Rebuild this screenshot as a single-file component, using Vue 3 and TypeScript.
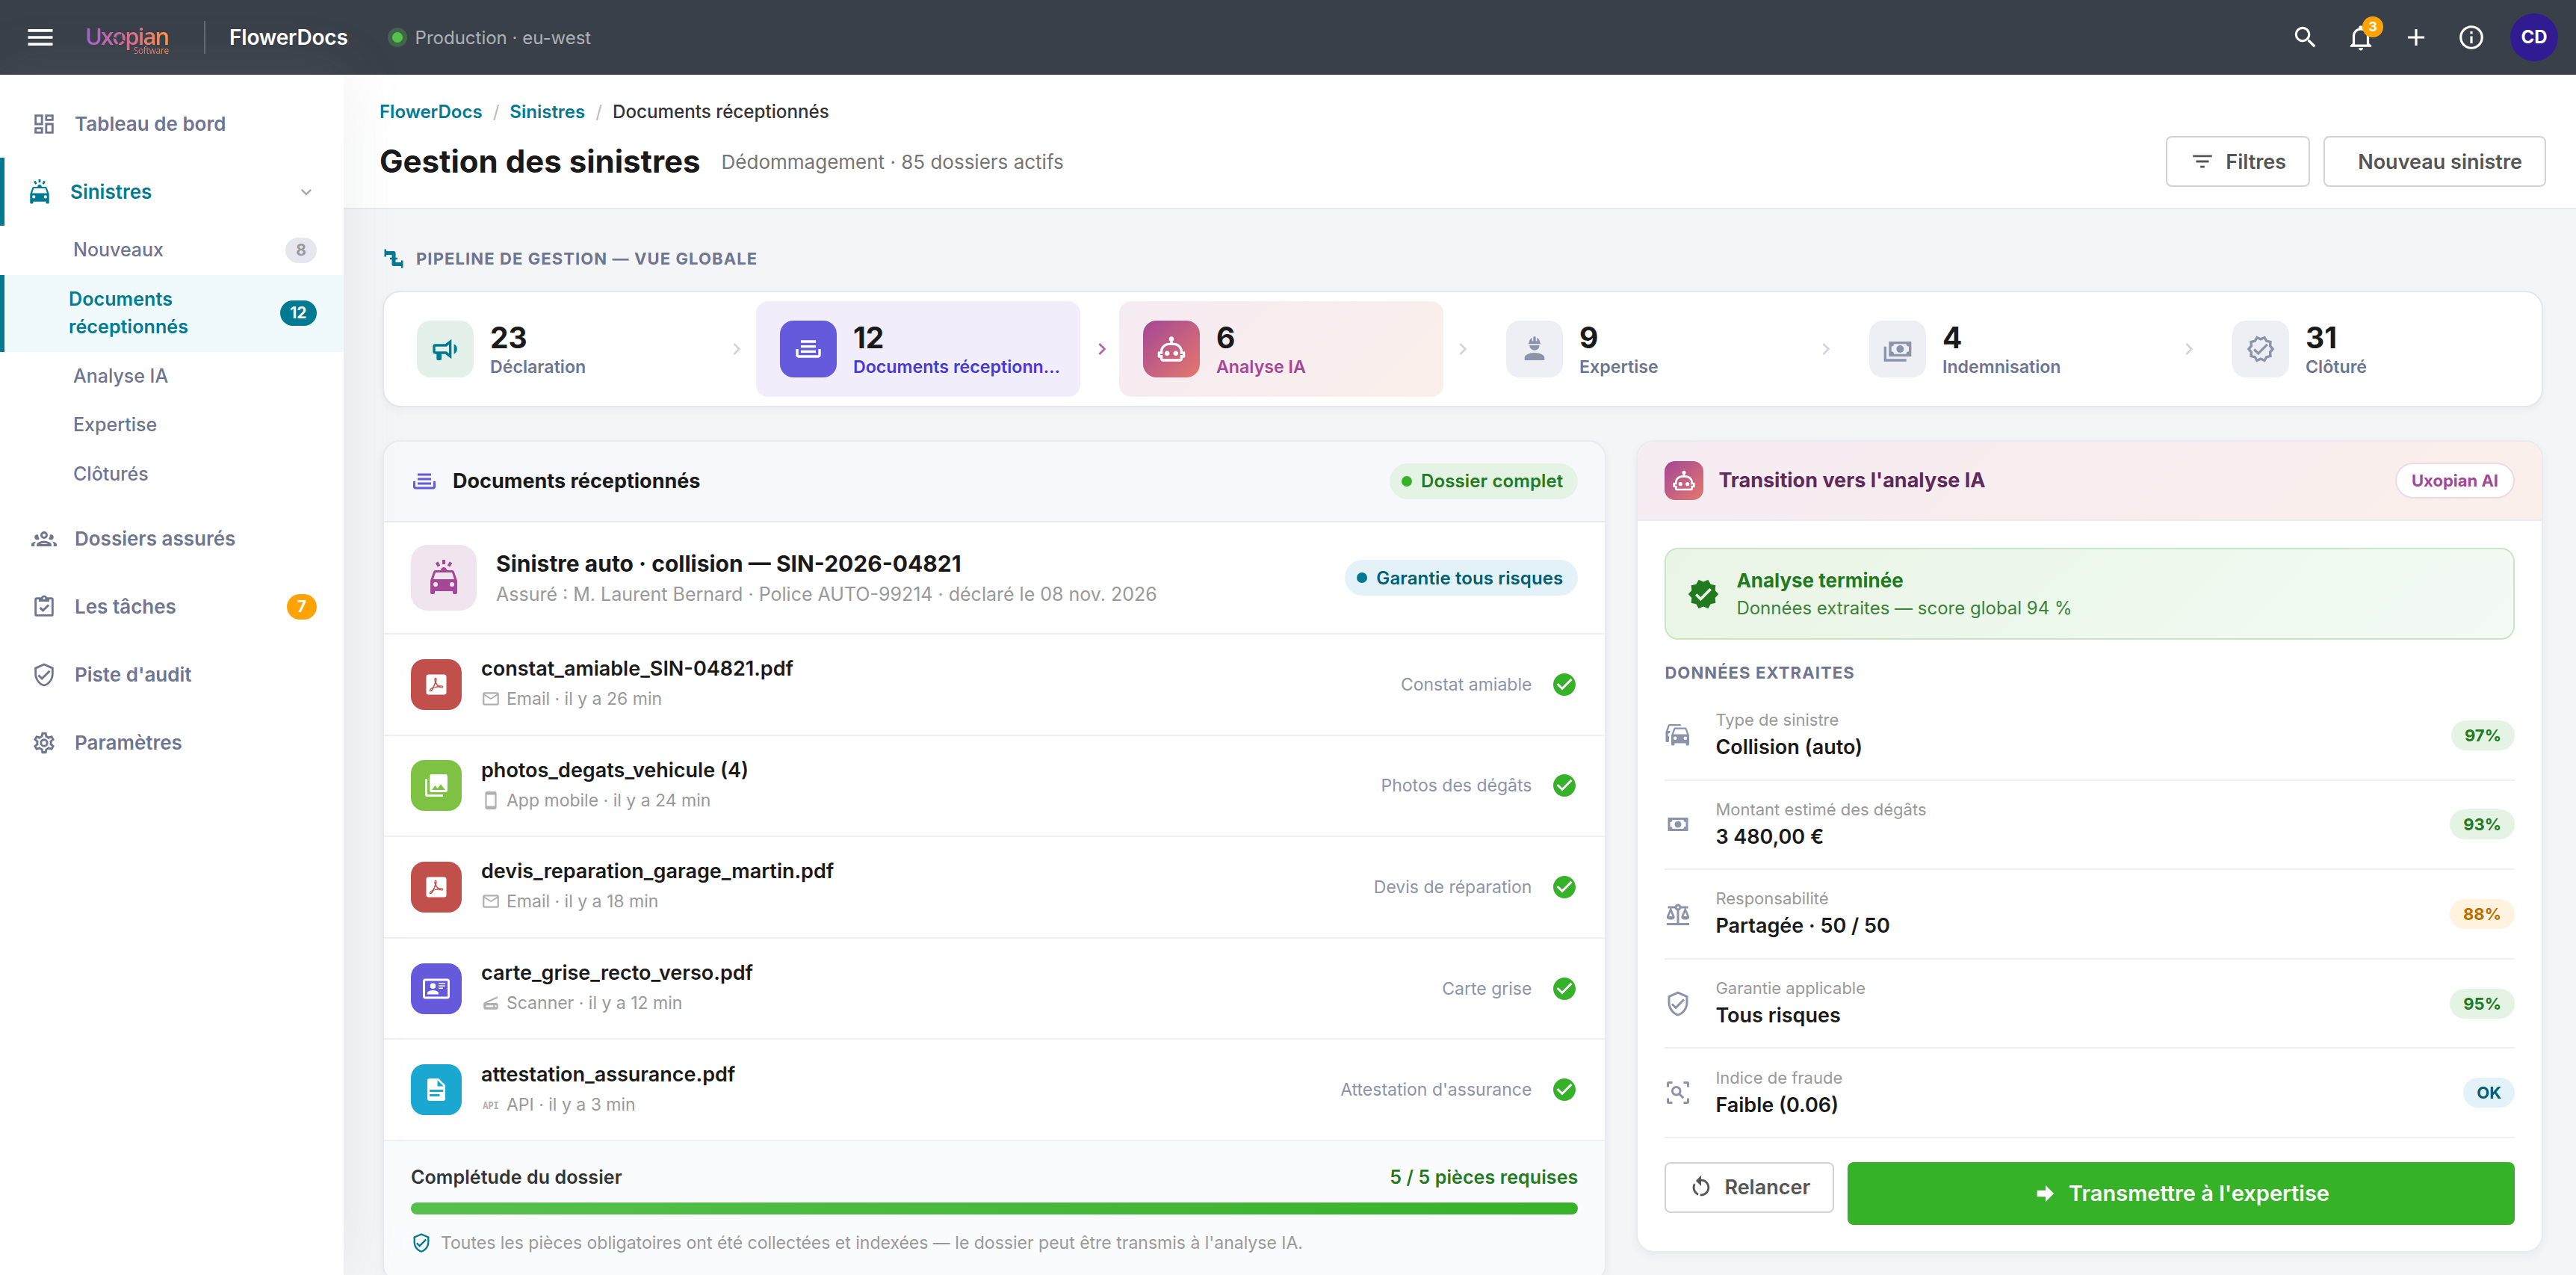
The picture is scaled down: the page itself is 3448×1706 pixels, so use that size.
<script setup lang="ts">
import { h } from 'vue'
import type { FunctionalComponent } from 'vue'

const icons: Record<string, string> = {
  menu: 'M3,6H21V8H3V6M3,11H21V13H3V11M3,16H21V18H3V16Z',
  magnify: 'M9.5,3A6.5,6.5 0 0,1 16,9.5C16,11.11 15.41,12.59 14.44,13.73L14.71,14H15.5L20.5,19L19,20.5L14,15.5V14.71L13.73,14.44C12.59,15.41 11.11,16 9.5,16A6.5,6.5 0 0,1 3,9.5A6.5,6.5 0 0,1 9.5,3M9.5,5C7,5 5,7 5,9.5C5,12 7,14 9.5,14C12,14 14,12 14,9.5C14,7 12,5 9.5,5Z',
  bell: 'M10 21H14C14 22.1 13.1 23 12 23S10 22.1 10 21M21 19V20H3V19L5 17V11C5 7.9 7 5.2 10 4.3V4C10 2.9 10.9 2 12 2S14 2.9 14 4V4.3C17 5.2 19 7.9 19 11V17L21 19M17 11C17 8.2 14.8 6 12 6S7 8.2 7 11V18H17V11Z',
  plus: 'M19,13H13V19H11V13H5V11H11V5H13V11H19V13Z',
  info: 'M11,9H13V7H11M12,20C7.59,20 4,16.41 4,12C4,7.59 7.59,4 12,4C16.41,4 20,7.59 20,12C20,16.41 16.41,20 12,20M12,2A10,10 0 0,0 2,12A10,10 0 0,0 12,22A10,10 0 0,0 22,12A10,10 0 0,0 12,2M11,17H13V11H11V17Z',
  dashboard: 'M19,5V7H15V5H19M9,5V11H5V5H9M19,13V19H15V13H19M9,17V19H5V17H9M21,3H13V9H21V3M11,3H3V13H11V3M21,11H13V21H21V11M11,15H3V21H11V15Z',
  emergency: 'M5,13L6.5,8.5H17.5L19,13M17.5,18A1.5,1.5 0 0,1 16,16.5A1.5,1.5 0 0,1 17.5,15A1.5,1.5 0 0,1 19,16.5A1.5,1.5 0 0,1 17.5,18M6.5,18A1.5,1.5 0 0,1 5,16.5A1.5,1.5 0 0,1 6.5,15A1.5,1.5 0 0,1 8,16.5A1.5,1.5 0 0,1 6.5,18M18.92,8C18.72,7.42 18.16,7 17.5,7H14C14,5.9 13.1,5 12,5S10,5.9 10,7H6.5C5.84,7 5.28,7.42 5.08,8L3,14V22A1,1 0 0,0 4,23H5A1,1 0 0,0 6,22V21H18V22A1,1 0 0,0 19,23H20A1,1 0 0,0 21,22V14L18.92,8M11,0H13V3H11V0M6.4,2.2L8.1,1.2L9.6,3.8L7.9,4.8L6.4,2.2M15.9,1.2L17.6,2.2L16.1,4.8L14.4,3.8L15.9,1.2Z',
  chevronDown: 'M7.41,8.58L12,13.17L16.59,8.58L18,10L12,16L6,10L7.41,8.58Z',
  chevronRight: 'M8.59,16.58L13.17,12L8.59,7.41L10,6L16,12L10,18L8.59,16.58Z',
  group: 'M12,5A3.5,3.5 0 0,0 8.5,8.5A3.5,3.5 0 0,0 12,12A3.5,3.5 0 0,0 15.5,8.5A3.5,3.5 0 0,0 12,5M12,7A1.5,1.5 0 0,1 13.5,8.5A1.5,1.5 0 0,1 12,10A1.5,1.5 0 0,1 10.5,8.5A1.5,1.5 0 0,1 12,7M5.5,8A2.5,2.5 0 0,0 3,10.5C3,11.44 3.53,12.25 4.29,12.68C4.65,12.88 5.06,13 5.5,13C5.94,13 6.35,12.88 6.71,12.68C7.08,12.47 7.39,12.17 7.62,11.81C6.89,10.86 6.5,9.7 6.5,8.5C6.5,8.41 6.5,8.31 6.5,8.22C6.2,8.08 5.86,8 5.5,8M18.5,8C18.14,8 17.8,8.08 17.5,8.22C17.5,8.31 17.5,8.41 17.5,8.5C17.5,9.7 17.11,10.86 16.38,11.81C16.5,12 16.63,12.15 16.78,12.3C16.94,12.45 17.1,12.58 17.29,12.68C17.65,12.88 18.06,13 18.5,13C18.94,13 19.35,12.88 19.71,12.68C20.47,12.25 21,11.44 21,10.5A2.5,2.5 0 0,0 18.5,8M12,14C9.66,14 5,15.17 5,17.5V19H19V17.5C19,15.17 14.34,14 12,14M4.71,14.55C2.78,14.78 0,15.76 0,17.5V19H3V17.07C3,16.06 3.69,15.22 4.71,14.55M19.29,14.55C20.31,15.22 21,16.06 21,17.07V19H24V17.5C24,15.76 21.22,14.78 19.29,14.55M12,16C13.53,16 15.24,16.5 16.23,17H7.77C8.76,16.5 10.47,16 12,16Z',
  clipboard: 'M19,3H14.82C14.4,1.84 13.3,1 12,1C10.7,1 9.6,1.84 9.18,3H5A2,2 0 0,0 3,5V19A2,2 0 0,0 5,21H19A2,2 0 0,0 21,19V5A2,2 0 0,0 19,3M12,3A1,1 0 0,1 13,4A1,1 0 0,1 12,5A1,1 0 0,1 11,4A1,1 0 0,1 12,3M7,7H17V5H19V19H5V5H7V7M7.5,13.5L9,12L11,14L15.5,9.5L17,11L11,17L7.5,13.5Z',
  shield: 'M21,11C21,16.55 17.16,21.74 12,23C6.84,21.74 3,16.55 3,11V5L12,1L21,5V11M12,21C15.75,20 19,15.54 19,11.22V6.3L12,3.18L5,6.3V11.22C5,15.54 8.25,20 12,21M10,17L6,13L7.41,11.59L10,14.17L16.59,7.58L18,9',
  cog: 'M12,8A4,4 0 0,1 16,12A4,4 0 0,1 12,16A4,4 0 0,1 8,12A4,4 0 0,1 12,8M12,10A2,2 0 0,0 10,12A2,2 0 0,0 12,14A2,2 0 0,0 14,12A2,2 0 0,0 12,10M10,22C9.75,22 9.54,21.82 9.5,21.58L9.13,18.93C8.5,18.68 7.96,18.34 7.44,17.94L4.95,18.95C4.73,19.03 4.46,18.95 4.34,18.73L2.34,15.27C2.21,15.05 2.27,14.78 2.46,14.63L4.57,12.97L4.5,12L4.57,11L2.46,9.37C2.27,9.22 2.21,8.95 2.34,8.73L4.34,5.27C4.46,5.05 4.73,4.96 4.95,5.05L7.44,6.05C7.96,5.66 8.5,5.32 9.13,5.07L9.5,2.42C9.54,2.18 9.75,2 10,2H14C14.25,2 14.46,2.18 14.5,2.42L14.87,5.07C15.5,5.32 16.04,5.66 16.56,6.05L19.05,5.05C19.27,4.96 19.54,5.05 19.66,5.27L21.66,8.73C21.79,8.95 21.73,9.22 21.54,9.37L19.43,11L19.5,12L19.43,13L21.54,14.63C21.73,14.78 21.79,15.05 21.66,15.27L19.66,18.73C19.54,18.95 19.27,19.04 19.05,18.95L16.56,17.95C16.04,18.34 15.5,18.68 14.87,18.93L14.5,21.58C14.46,21.82 14.25,22 14,22H10M11.25,4L10.88,6.61C9.68,6.86 8.62,7.5 7.85,8.39L5.44,7.35L4.69,8.65L6.8,10.2C6.4,11.37 6.4,12.64 6.8,13.8L4.68,15.36L5.43,16.66L7.86,15.62C8.63,16.5 9.68,17.14 10.87,17.38L11.24,20H12.76L13.13,17.39C14.32,17.14 15.37,16.5 16.14,15.62L18.57,16.66L19.32,15.36L17.2,13.81C17.6,12.64 17.6,11.37 17.2,10.2L19.31,8.65L18.56,7.35L16.15,8.39C15.38,7.5 14.32,6.86 13.12,6.62L12.75,4H11.25Z',
  filter: 'M6,13H18V11H6M3,6V8H21V6M10,18H14V16H10V18Z',
  pipe: 'M22,14H20V16H14V13H16V11H14V6A2,2 0 0,0 12,4H4V2H2V10H4V8H10V11H8V13H10V18A2,2 0 0,0 12,20H20V22H22',
  bullhorn: 'M12,8H4A2,2 0 0,0 2,10V14A2,2 0 0,0 4,16H5V20A1,1 0 0,0 6,21H8A1,1 0 0,0 9,20V16H12L17,20V4L12,8M15,15.6L13,14H4V10H13L15,8.4V15.6M21.5,12C21.5,13.71 20.54,15.26 19,16V8C20.53,8.75 21.5,10.3 21.5,12Z',
  tray: 'M18 5H6V7H18V5M6 9H18V11H6V9M2 12H4V17H20V12H22V17C22 18.11 21.11 19 20 19H4C2.9 19 2 18.11 2 17V12M18 13H6V15H18V13Z',
  robot: 'M17.5 15.5C17.5 16.61 16.61 17.5 15.5 17.5S13.5 16.61 13.5 15.5 14.4 13.5 15.5 13.5 17.5 14.4 17.5 15.5M8.5 13.5C7.4 13.5 6.5 14.4 6.5 15.5S7.4 17.5 8.5 17.5 10.5 16.61 10.5 15.5 9.61 13.5 8.5 13.5M23 15V18C23 18.55 22.55 19 22 19H21V20C21 21.11 20.11 22 19 22H5C3.9 22 3 21.11 3 20V19H2C1.45 19 1 18.55 1 18V15C1 14.45 1.45 14 2 14H3C3 10.13 6.13 7 10 7H11V5.73C10.4 5.39 10 4.74 10 4C10 2.9 10.9 2 12 2S14 2.9 14 4C14 4.74 13.6 5.39 13 5.73V7H14C17.87 7 21 10.13 21 14H22C22.55 14 23 14.45 23 15M21 16H19V14C19 11.24 16.76 9 14 9H10C7.24 9 5 11.24 5 14V16H3V17H5V20H19V17H21V16Z',
  hardHat: 'M12,15C7.58,15 4,16.79 4,19V21H20V19C20,16.79 16.42,15 12,15M8,9A4,4 0 0,0 12,13A4,4 0 0,0 16,9M11.5,2C11.2,2 11,2.21 11,2.5V5.5H10V3C10,3 7.75,3.86 7.75,6.75C7.75,6.75 7,6.89 7,8H17C16.95,6.89 16.25,6.75 16.25,6.75C16.25,3.86 14,3 14,3V5.5H13V2.5C13,2.21 12.81,2 12.5,2H11.5Z',
  cashMultiple: 'M5,6H23V18H5V6M14,9A3,3 0 0,1 17,12A3,3 0 0,1 14,15A3,3 0 0,1 11,12A3,3 0 0,1 14,9M9,8A2,2 0 0,1 7,10V14A2,2 0 0,1 9,16H19A2,2 0 0,1 21,14V10A2,2 0 0,1 19,8H9M1,10H3V20H19V22H1V10Z',
  decagramOutline: 'M23 12L20.6 9.2L20.9 5.5L17.3 4.7L15.4 1.5L12 3L8.6 1.5L6.7 4.7L3.1 5.5L3.4 9.2L1 12L3.4 14.8L3.1 18.5L6.7 19.3L8.6 22.5L12 21L15.4 22.5L17.3 19.3L20.9 18.5L20.6 14.8L23 12M18.7 16.9L16 17.5L14.6 19.9L12 18.8L9.4 19.9L8 17.5L5.3 16.9L5.5 14.1L3.7 12L5.5 9.9L5.3 7.1L8 6.5L9.4 4.1L12 5.2L14.6 4.1L16 6.5L18.7 7.1L18.5 9.9L20.3 12L18.5 14.1L18.7 16.9M16.6 7.6L18 9L10 17L6 13L7.4 11.6L10 14.2L16.6 7.6Z',
  decagram: 'M23,12L20.56,9.22L20.9,5.54L17.29,4.72L15.4,1.54L12,3L8.6,1.54L6.71,4.72L3.1,5.53L3.44,9.21L1,12L3.44,14.78L3.1,18.47L6.71,19.29L8.6,22.47L12,21L15.4,22.46L17.29,19.28L20.9,18.46L20.56,14.78L23,12M10,17L6,13L7.41,11.59L10,14.17L16.59,7.58L18,9L10,17Z',
  pdf: 'M11.43,10.94C11.2,11.68 10.87,12.47 10.42,13.34C10.22,13.72 10,14.08 9.92,14.38L10.03,14.34V14.34C11.3,13.85 12.5,13.57 13.37,13.41C13.22,13.31 13.08,13.2 12.96,13.09C12.36,12.58 11.84,11.84 11.43,10.94M17.91,14.75C17.74,14.94 17.44,15.05 17,15.05C16.24,15.05 15,14.82 14,14.31C12.28,14.5 11,14.73 9.97,15.06C9.92,15.08 9.86,15.1 9.79,15.13C8.55,17.25 7.63,18.2 6.82,18.2C6.66,18.2 6.5,18.16 6.38,18.09L5.9,17.78L5.87,17.73C5.8,17.55 5.78,17.38 5.82,17.19C5.93,16.66 6.5,15.82 7.7,15.07C7.89,14.93 8.19,14.77 8.59,14.58C8.89,14.06 9.21,13.45 9.55,12.78C10.06,11.75 10.38,10.73 10.63,9.85V9.84C10.26,8.63 10.04,7.9 10.41,6.57C10.5,6.19 10.83,5.8 11.2,5.8H11.44C11.67,5.8 11.89,5.88 12.05,6.04C12.71,6.7 12.4,8.31 12.07,9.64C12.05,9.7 12.04,9.75 12.03,9.78C12.43,10.91 13,11.82 13.63,12.34C13.89,12.54 14.18,12.74 14.5,12.92C14.95,12.87 15.38,12.85 15.79,12.85C17.03,12.85 17.78,13.07 18.07,13.54C18.17,13.7 18.22,13.89 18.19,14.09C18.18,14.34 18.09,14.57 17.91,14.75M19,3H5A2,2 0 0,0 3,5V19A2,2 0 0,0 5,21H19A2,2 0 0,0 21,19V5C21,3.89 20.1,3 19,3M17.5,14.04C17.4,13.94 17,13.69 15.6,13.69C15.53,13.69 15.46,13.69 15.37,13.79C16.1,14.11 16.81,14.3 17.27,14.3C17.34,14.3 17.4,14.29 17.46,14.28H17.5C17.55,14.26 17.58,14.25 17.57,14.15C17.56,14.12 17.55,14.08 17.5,14.04M8.33,15.5C8.12,15.62 7.95,15.73 7.85,15.81C7.14,16.46 6.69,17.12 6.64,17.5C7.09,17.35 7.68,16.69 8.33,15.5M11.35,8.59L11.4,8.55C11.47,8.23 11.5,7.95 11.56,7.73L11.59,7.57C11.69,7 11.67,6.71 11.5,6.47L11.35,6.42C11.33,6.45 11.3,6.5 11.28,6.54C11.11,6.96 11.12,7.69 11.35,8.59Z',
  images: 'M22,16V4A2,2 0 0,0 20,2H8A2,2 0 0,0 6,4V16A2,2 0 0,0 8,18H20A2,2 0 0,0 22,16M11,12L13.03,14.71L16,11L20,16H8M2,6V20A2,2 0 0,0 4,22H18V20H4V6',
  idCard: 'M22,3H2C0.91,3.04 0.04,3.91 0,5V19C0.04,20.09 0.91,20.96 2,21H22C23.09,20.96 23.96,20.09 24,19V5C23.96,3.91 23.09,3.04 22,3M22,19H2V5H22V19M14,17V15.75C14,14.09 10.66,13.25 9,13.25C7.34,13.25 4,14.09 4,15.75V17H14M9,7A2.5,2.5 0 0,0 6.5,9.5A2.5,2.5 0 0,0 9,12A2.5,2.5 0 0,0 11.5,9.5A2.5,2.5 0 0,0 9,7M14,7V8H20V7H14M14,9V10H20V9H14M14,11V12H18V11H14',
  file: 'M13,9H18.5L13,3.5V9M6,2H14L20,8V20A2,2 0 0,1 18,22H6C4.89,22 4,21.1 4,20V4C4,2.89 4.89,2 6,2M15,18V16H6V18H15M18,14V12H6V14H18Z',
  email: 'M22 6C22 4.9 21.1 4 20 4H4C2.9 4 2 4.9 2 6V18C2 19.1 2.9 20 4 20H20C21.1 20 22 19.1 22 18V6M20 6L12 11L4 6H20M20 18H4V8L12 13L20 8V18Z',
  phone: 'M17,19H7V5H17M17,1H7C5.89,1 5,1.89 5,3V21A2,2 0 0,0 7,23H17A2,2 0 0,0 19,21V3C19,1.89 18.1,1 17,1Z',
  scanner: 'M19.8,4L20.5,5.9L7,12H19C20.1,12 21,12.9 21,14V18C21,19.1 20.1,20 19,20H5C3.9,20 3,19.1 3,18V13C3,12 3.4,11.4 4.3,11L19.8,4M6,15V17H15V15H6M17,15V17H19V15H17Z',
  check: 'M12 2C6.5 2 2 6.5 2 12S6.5 22 12 22 22 17.5 22 12 17.5 2 12 2M10 17L5 12L6.41 10.59L10 14.17L17.59 6.58L19 8L10 17Z',
  cars: 'M8,11L9.5,6.5H18.5L20,11M18.5,16A1.5,1.5 0 0,1 17,14.5A1.5,1.5 0 0,1 18.5,13A1.5,1.5 0 0,1 20,14.5A1.5,1.5 0 0,1 18.5,16M9.5,16A1.5,1.5 0 0,1 8,14.5A1.5,1.5 0 0,1 9.5,13A1.5,1.5 0 0,1 11,14.5A1.5,1.5 0 0,1 9.5,16M19.92,6C19.71,5.4 19.14,5 18.5,5H9.5C8.86,5 8.29,5.4 8.08,6L6,12V20A1,1 0 0,0 7,21H8A1,1 0 0,0 9,20V19H19V20A1,1 0 0,0 20,21H21A1,1 0 0,0 22,20V12L19.92,6M14.92,3C14.71,2.4 14.14,2 13.5,2H4.5C3.86,2 3.29,2.4 3.08,3L1,9V17A1,1 0 0,0 2,18H3A1,1 0 0,0 4,17V12.91C3.22,12.63 2.82,11.77 3.1,11C3.32,10.4 3.87,10 4.5,10H4.57L5.27,8H3L4.5,3.5H15.09L14.92,3Z',
  cash: 'M3,6H21V18H3V6M12,9A3,3 0 0,1 15,12A3,3 0 0,1 12,15A3,3 0 0,1 9,12A3,3 0 0,1 12,9M7,8A2,2 0 0,1 5,10V14A2,2 0 0,1 7,16H17A2,2 0 0,1 19,14V10A2,2 0 0,1 17,8H7Z',
  scale: 'M12,3C10.73,3 9.6,3.8 9.18,5H3V7H4.95L2,14C1.53,16 3,17 5.5,17C8,17 9.56,16 9,14L6.05,7H9.17C9.5,7.85 10.15,8.5 11,8.83V20H2V22H22V20H13V8.82C13.85,8.5 14.5,7.85 14.82,7H17.95L15,14C14.53,16 16,17 18.5,17C21,17 22.56,16 22,14L19.05,7H21V5H14.83C14.4,3.8 13.27,3 12,3M12,5A1,1 0 0,1 13,6A1,1 0 0,1 12,7A1,1 0 0,1 11,6A1,1 0 0,1 12,5M5.5,10.25L7,14H4L5.5,10.25M18.5,10.25L20,14H17L18.5,10.25Z',
  scan: 'M17 22V20H20V17H22V20.5C22 20.89 21.84 21.24 21.54 21.54C21.24 21.84 20.89 22 20.5 22H17M7 22H3.5C3.11 22 2.76 21.84 2.46 21.54C2.16 21.24 2 20.89 2 20.5V17H4V20H7V22M17 2H20.5C20.89 2 21.24 2.16 21.54 2.46C21.84 2.76 22 3.11 22 3.5V7H20V4H17V2M7 2V4H4V7H2V3.5C2 3.11 2.16 2.76 2.46 2.46C2.76 2.16 3.11 2 3.5 2H7M10.5 6C13 6 15 8 15 10.5C15 11.38 14.75 12.2 14.31 12.9L17.57 16.16L16.16 17.57L12.9 14.31C12.2 14.75 11.38 15 10.5 15C8 15 6 13 6 10.5C6 8 8 6 10.5 6M10.5 8C9.12 8 8 9.12 8 10.5C8 11.88 9.12 13 10.5 13C11.88 13 13 11.88 13 10.5C13 9.12 11.88 8 10.5 8Z',
  restart: 'M12,4C14.1,4 16.1,4.8 17.6,6.3C20.7,9.4 20.7,14.5 17.6,17.6C15.8,19.5 13.3,20.2 10.9,19.9L11.4,17.9C13.1,18.1 14.9,17.5 16.2,16.2C18.5,13.9 18.5,10.1 16.2,7.7C15.1,6.6 13.5,6 12,6V10.6L7,5.6L12,0.6V4M6.3,17.6C3.7,15 3.3,11 5.1,7.9L6.6,9.4C5.5,11.6 5.9,14.4 7.8,16.2C8.3,16.7 8.9,17.1 9.6,17.4L9,19.4C8,19 7.1,18.4 6.3,17.6Z',
  arrow: 'M4,15V9H12V4.16L19.84,12L12,19.84V15H4Z',
}

const Icon: FunctionalComponent<{ name: string; size: number }> = (props) =>
  h(
    'svg',
    { viewBox: '0 0 24 24', width: props.size, height: props.size, fill: 'currentColor', 'aria-hidden': 'true', style: { flex: 'none', display: 'block' } },
    [h('path', { d: icons[props.name] })],
  )
Icon.props = ['name', 'size']

interface Stage { icon: string; count: number; label: string; tone: string }
const stages: Stage[] = [
  { icon: 'bullhorn', count: 23, label: 'Déclaration', tone: 'mint' },
  { icon: 'tray', count: 12, label: 'Documents réceptionnés', tone: 'violet' },
  { icon: 'robot', count: 6, label: 'Analyse IA', tone: 'ai' },
  { icon: 'hardHat', count: 9, label: 'Expertise', tone: 'idle' },
  { icon: 'cashMultiple', count: 4, label: 'Indemnisation', tone: 'idle' },
  { icon: 'decagramOutline', count: 31, label: 'Clôturé', tone: 'idle' },
]

interface Doc { icon: string; tone: string; name: string; via: string; source: string; kind: string }
const docs: Doc[] = [
  { icon: 'pdf', tone: 'red', name: 'constat_amiable_SIN-04821.pdf', via: 'email', source: 'Email · il y a 26 min', kind: 'Constat amiable' },
  { icon: 'images', tone: 'lime', name: 'photos_degats_vehicule (4)', via: 'phone', source: 'App mobile · il y a 24 min', kind: 'Photos des dégâts' },
  { icon: 'pdf', tone: 'red', name: 'devis_reparation_garage_martin.pdf', via: 'email', source: 'Email · il y a 18 min', kind: 'Devis de réparation' },
  { icon: 'idCard', tone: 'indigo', name: 'carte_grise_recto_verso.pdf', via: 'scanner', source: 'Scanner · il y a 12 min', kind: 'Carte grise' },
  { icon: 'file', tone: 'cyan', name: 'attestation_assurance.pdf', via: 'api', source: 'API · il y a 3 min', kind: "Attestation d'assurance" },
]

interface Field { icon: string; label: string; value: string; score: string; tone: string }
const fields: Field[] = [
  { icon: 'cars', label: 'Type de sinistre', value: 'Collision (auto)', score: '97%', tone: 'good' },
  { icon: 'cash', label: 'Montant estimé des dégâts', value: '3 480,00 €', score: '93%', tone: 'good' },
  { icon: 'scale', label: 'Responsabilité', value: 'Partagée · 50 / 50', score: '88%', tone: 'warn' },
  { icon: 'shield', label: 'Garantie applicable', value: 'Tous risques', score: '95%', tone: 'good' },
  { icon: 'scan', label: 'Indice de fraude', value: 'Faible (0.06)', score: 'OK', tone: 'info' },
]
</script>

<template>
  <div class="app">
    <header class="topbar">
      <Icon name="menu" :size="44" />
      <div class="logo">
        <span class="logo-name">Uxopian</span>
        <span class="logo-sub">Software</span>
        <svg class="aperture" viewBox="0 0 18 18" width="18" height="18"><path d="M1 6L7 9M17 12L11 9M12 1L9 6M6 17L9 12" /></svg>
      </div>
      <span class="divider"></span>
      <strong class="product">FlowerDocs</strong>
      <span class="env"><i></i>Production · eu-west</span>
      <nav class="tools">
        <button><Icon name="magnify" :size="38" /></button>
        <button><Icon name="bell" :size="38" /><b>3</b></button>
        <button><Icon name="plus" :size="38" /></button>
        <button><Icon name="info" :size="38" /></button>
        <span class="avatar">CD</span>
      </nav>
    </header>

    <div class="body">
      <aside class="sidebar">
        <a class="item"><Icon name="dashboard" :size="34" />Tableau de bord</a>
        <a class="item active"><Icon name="emergency" :size="34" />Sinistres<Icon class="caret" name="chevronDown" :size="28" /></a>
        <div class="sub">
          <a class="subitem"><span>Nouveaux</span><b class="count">8</b></a>
          <a class="subitem active"><span>Documents réceptionnés</span><b class="count teal">12</b></a>
          <a class="subitem"><span>Analyse IA</span></a>
          <a class="subitem"><span>Expertise</span></a>
          <a class="subitem"><span>Clôturés</span></a>
        </div>
        <a class="item"><Icon name="group" :size="34" />Dossiers assurés</a>
        <a class="item"><Icon name="clipboard" :size="34" />Les tâches<b class="count orange">7</b></a>
        <a class="item"><Icon name="shield" :size="34" />Piste d'audit</a>
        <a class="item"><Icon name="cog" :size="34" />Paramètres</a>
      </aside>

      <main class="main">
        <section class="pagehead">
          <div class="titles">
            <div class="crumbs"><a>FlowerDocs</a><i>/</i><a>Sinistres</a><i>/</i><span>Documents réceptionnés</span></div>
            <div class="titleline">
              <h1>Gestion des sinistres</h1>
              <span>Dédommagement · 85 dossiers actifs</span>
            </div>
          </div>
          <div class="actions">
            <button class="btn"><Icon name="filter" :size="34" />Filtres</button>
            <button class="btn"><span class="noicon"></span>Nouveau sinistre</button>
          </div>
        </section>

        <div class="content">
          <h2 class="section"><Icon name="pipe" :size="30" />PIPELINE DE GESTION — VUE GLOBALE</h2>

          <div class="pipeline">
            <template v-for="(s, i) in stages" :key="s.label">
              <div class="stage" :class="s.tone">
                <span class="stage-icon"><Icon :name="s.icon" :size="40" /></span>
                <div class="stage-text">
                  <strong>{{ s.count }}</strong>
                  <span>{{ s.label }}</span>
                </div>
              </div>
              <span v-if="i < stages.length - 1" class="arrow" :class="{ hot: i === 1 }"><Icon name="chevronRight" :size="32" /></span>
            </template>
          </div>

          <div class="columns">
            <section class="panel">
              <div class="panel-head">
                <Icon class="violet-ink" name="tray" :size="36" />
                <h3>Documents réceptionnés</h3>
                <span class="status good"><i></i>Dossier complet</span>
              </div>
              <div class="claim">
                <span class="claim-icon"><Icon name="emergency" :size="48" /></span>
                <div class="claim-text">
                  <strong>Sinistre auto · collision — SIN-2026-04821</strong>
                  <span>Assuré : M. Laurent Bernard · Police AUTO-99214 · déclaré le 08 nov. 2026</span>
                </div>
                <span class="status info"><i></i>Garantie tous risques</span>
              </div>
              <div v-for="d in docs" :key="d.name" class="doc">
                <span class="doc-icon" :class="d.tone"><Icon :name="d.icon" :size="36" /></span>
                <div class="doc-text">
                  <strong>{{ d.name }}</strong>
                  <span class="via">
                    <svg v-if="d.via === 'api'" class="api" viewBox="0 0 24 24" width="26" height="26"><text x="2" y="17.5" textLength="20" lengthAdjust="spacingAndGlyphs">API</text></svg>
                    <Icon v-else :name="d.via" :size="26" />{{ d.source }}
                  </span>
                </div>
                <span class="kind">{{ d.kind }}</span>
                <Icon class="ok" name="check" :size="36" />
              </div>
              <div class="progress">
                <div class="progress-head"><strong>Complétude du dossier</strong><b>5 / 5 pièces requises</b></div>
                <div class="bar"></div>
                <p><Icon name="shield" :size="28" />Toutes les pièces obligatoires ont été collectées et indexées — le dossier peut être transmis à l'analyse IA.</p>
              </div>
            </section>

            <section class="panel">
              <div class="panel-head ai-head">
                <span class="ai-icon"><Icon name="robot" :size="32" /></span>
                <h3>Transition vers l'analyse IA</h3>
                <span class="brand">Uxopian AI</span>
              </div>
              <div class="ai-body">
                <div class="done">
                  <Icon name="decagram" :size="44" />
                  <div>
                    <strong>Analyse terminée</strong>
                    <span>Données extraites — score global 94 %</span>
                  </div>
                </div>
                <h4>DONNÉES EXTRAITES</h4>
                <div v-for="f in fields" :key="f.label" class="field">
                  <Icon :name="f.icon" :size="36" />
                  <div class="field-text"><span>{{ f.label }}</span><strong>{{ f.value }}</strong></div>
                  <b class="score" :class="f.tone">{{ f.score }}</b>
                </div>
                <div class="ctas">
                  <button class="btn"><Icon name="restart" :size="34" />Relancer</button>
                  <button class="cta"><Icon name="arrow" :size="34" />Transmettre à l'expertise</button>
                </div>
              </div>
            </section>
          </div>
        </div>
      </main>
    </div>
  </div>
</template>

<style>
html, body { margin: 0; background: #f4f5f7; }
</style>

<style scoped>
* { box-sizing: border-box; }
h1, h2, h3, h4, p { margin: 0; }
button { font: inherit; border: 0; background: none; padding: 0; }
.app { width: 3448px; height: 1706px; overflow: hidden; display: flex; flex-direction: column; background: #f4f5f7; font-family: Inter, "Liberation Sans", sans-serif; font-size: 26px; color: #1a1a1a; }

.topbar { height: 100px; flex: none; display: flex; align-items: center; background: #3a4049; color: #fff; padding: 0 24px 0 32px; }
.logo { position: relative; width: 112px; height: 50px; padding-top: 7px; margin-left: 38px; display: flex; flex-direction: column; background: linear-gradient(90deg, #a95fd6, #d96f8c 55%, #ff9548); -webkit-background-clip: text; background-clip: text; color: transparent; }
.logo-name { font: 600 31px/32px "Open Sans", sans-serif; letter-spacing: -1.9px; }
.logo-sub { margin-top: -2px; font: 400 12px/12px "Open Sans", sans-serif; text-align: right; letter-spacing: -0.3px; }
.aperture { position: absolute; left: 37px; top: 19px; fill: none; stroke: #3a4049; stroke-width: 1.6; }
.divider { width: 2px; height: 44px; margin-left: 47px; background: #646a72; }
.product { margin-left: 32px; font-size: 28px; font-weight: 600; letter-spacing: -0.2px; }
.env { display: flex; align-items: center; margin-left: 53px; font-size: 24px; color: #aeb1b5; }
.env i { width: 14px; height: 14px; margin: 6px 17px 6px 6px; border-radius: 50%; background: #53c14a; box-shadow: 0 0 0 6px #41654b; }
.tools { margin-left: auto; display: flex; align-items: center; gap: 8px; }
.tools button { position: relative; width: 66px; height: 66px; display: flex; align-items: center; justify-content: center; color: #fff; }
.tools b { position: absolute; top: 5px; right: 3px; width: 28px; height: 28px; border-radius: 14px; background: #ffa305; font-size: 18px; font-weight: 700; line-height: 28px; text-align: center; }
.avatar { width: 64px; height: 64px; margin-left: 11px; border-radius: 50%; background: #311b92; font-size: 24px; font-weight: 700; line-height: 64px; text-align: center; }

.body { flex: 1; display: flex; min-height: 0; }
.sidebar { position: relative; z-index: 2; width: 460px; flex: none; padding-top: 20px; background: #fff; box-shadow: 0 0 80px rgba(149, 157, 165, 0.15); }
.item { height: 91px; display: flex; align-items: center; gap: 24px; padding: 0 36px 0 42px; font-size: 26px; font-weight: 600; color: #6e7590; }
.item.active { border-left: 6px solid #007a92; padding-left: 30px; color: #007a92; }
.caret { margin-left: auto; color: #a8a8a8; }
.sub { padding-bottom: 8px; }
.subitem { display: flex; align-items: center; justify-content: space-between; padding: 14px 36px 14px 98px; font-size: 25px; line-height: 37.5px; font-weight: 500; color: #6e7590; }
.subitem.active { border-left: 6px solid #007a92; padding-left: 86px; background: #f0f9fb; color: #007a92; font-weight: 600; letter-spacing: 0.1px; }
.subitem.active span { width: 180px; }
.count { flex: none; height: 34px; padding: 0 14px; border-radius: 17px; background: #e6e6ee; color: #999; font-size: 21px; font-weight: 700; line-height: 34px; letter-spacing: 0; }
.count.teal { background: #007a92; color: #fff; padding: 0 13.5px; }
.count.orange { margin-left: auto; padding: 0 14px; background: #ffa305; color: #fff; }

.main { flex: 1; min-width: 0; display: flex; flex-direction: column; }
.pagehead { height: 180px; flex: none; display: flex; justify-content: space-between; padding: 0 40px 0 48px; background: #fff; border-bottom: 2px solid #e8e9ec; }
.titles { padding-top: 29px; }
.crumbs { display: flex; height: 40px; align-items: center; font-size: 24.2px; font-weight: 500; color: #333; }
.crumbs a { font-size: 24px; color: #007a92; font-weight: 600; }
.crumbs i { margin: 0 14px; font-style: normal; font-weight: 400; color: #bbb; }
.titleline { display: flex; align-items: center; height: 52px; margin-top: 21px; gap: 28px; }
.titleline h1 { font-size: 42px; font-weight: 700; line-height: 52px; }
.titleline span { font-size: 26px; color: #757575; }
.actions { display: flex; gap: 18px; padding-top: 82px; }
.btn { height: 68px; display: flex; align-items: center; gap: 14px; padding: 0 30px; border: 2px solid #d3d3d3; border-radius: 8px; background: #fff; font-size: 27px; font-weight: 600; color: #555; }
.noicon { width: 0; }

.content { padding: 46px 44px 0 52px; }
.section { display: flex; align-items: center; gap: 15px; height: 40px; font-size: 22px; font-weight: 700; letter-spacing: 1.1px; color: #6e7590; }
.section svg { color: #007a92; }
.pipeline { display: flex; margin-top: 23px; height: 156px; padding: 12px; border: 2px solid #e6e6ee; border-radius: 24px; background: #fff; box-shadow: 0 4px 8px rgba(30, 30, 60, 0.04); }
.stage { flex: 1 1 0; min-width: 0; display: flex; align-items: center; gap: 22px; padding: 0 26px 0 32px; border-radius: 16px; color: #6e7590; }
.stage-icon { width: 76px; height: 76px; flex: none; display: flex; align-items: center; justify-content: center; border-radius: 18px; background: #eeeff4; color: #8c94ab; }
.stage-text { min-width: 0; display: flex; flex-direction: column; padding-top: 5px; }
.stage-text strong { height: 42px; font-size: 39px; font-weight: 700; line-height: 42px; color: #1a1a1a; }
.stage-text span { font-size: 23.2px; font-weight: 600; line-height: 36px; white-space: nowrap; overflow: hidden; text-overflow: ellipsis; }
.mint .stage-icon { background: #e4f1ea; color: #007a92; }
.violet { background: #f1edfb; color: #4638d2; }
.violet .stage-icon { background: #6559dc; color: #fff; }
.ai { background: linear-gradient(135deg, #f5ecf3, #fbefea); color: #a34796; }
.ai .stage-icon, .ai-icon { background: linear-gradient(135deg, #a34796, #e5786d); color: #fff; }
.arrow { width: 52px; flex: none; display: flex; align-items: center; justify-content: center; color: #d3d4de; }
.arrow.hot { padding-left: 6px; color: #b565aa; }

.columns { display: grid; grid-template-columns: 1.35fr 1fr; gap: 40px; margin-top: 44px; align-items: start; }
.panel { overflow: hidden; border: 2px solid #eaebf0; border-radius: 24px; background: #fff; box-shadow: 0 4px 12px rgba(30, 30, 60, 0.05); }
.panel-head { display: flex; align-items: center; height: 108px; padding: 0 36px 1px; border-bottom: 2px solid #eaebef; background: #f7f8fc; }
.panel-head h3 { margin-left: 20px; font-size: 27px; font-weight: 700; }
.violet-ink { color: #6559dc; }
.status { margin-left: auto; height: 48px; display: flex; align-items: center; gap: 12px; padding: 0 20px 0 16px; border-radius: 24px; font-size: 24px; font-weight: 600; letter-spacing: 0.12px; }
.status i { width: 14px; height: 14px; border-radius: 50%; background: currentColor; }
.status.good { background: #e5f3e4; color: #227a1e; }
.status.good i { background: #36b229; }
.status.info { background: #e3f2f8; color: #005f73; }
.status.info i { background: #007a92; }
.claim { display: flex; align-items: center; height: 150px; padding: 0 36px; border-bottom: 2px solid #f0f0f3; }
.claim-icon { width: 88px; height: 88px; display: flex; align-items: center; justify-content: center; border-radius: 22px; background: #f0e4ef; color: #a34796; }
.claim-text { display: flex; flex-direction: column; margin-left: 26px; }
.claim-text strong { font-size: 30px; font-weight: 700; line-height: 43px; }
.claim-text span { font-size: 25px; line-height: 38px; color: #999; }
.doc { display: flex; align-items: center; height: 135.6px; padding: 0 36px; border-bottom: 2px solid #f0f0f3; }
.doc-icon { width: 68px; height: 68px; flex: none; display: flex; align-items: center; justify-content: center; border-radius: 18px; color: #fff; }
.red { background: #c14f4b; }
.lime { background: #7dc243; }
.indigo { background: #6559dc; }
.cyan { background: #1aa8d0; }
.doc-text { display: flex; flex-direction: column; margin-left: 26px; padding-bottom: 3px; }
.doc-text strong { font-size: 27px; font-weight: 600; line-height: 42px; }
.via { display: flex; align-items: center; gap: 8px; height: 38px; font-size: 23px; color: #999; }
.via svg { color: #b0b0b0; }
.api { overflow: visible; }
.api text { font: 700 13px "Liberation Mono", monospace; fill: #b0b0b0; }
.kind { margin-left: auto; font-size: 23px; color: #8c94ab; }
.ok { margin-left: 26px; color: #36b229; }
.progress { height: 187px; padding: 25px 36px 0; background: #fafbfd; }
.progress-head { display: flex; justify-content: space-between; height: 46px; line-height: 46px; font-size: 25px; letter-spacing: 0.1px; }
.progress-head strong { font-weight: 600; color: #333; }
.progress-head b { font-weight: 600; color: #227a1e; }
.bar { height: 16px; margin-top: 11px; border-radius: 8px; background: linear-gradient(90deg, #57c04d, #36b229); }
.progress p { display: flex; align-items: center; gap: 12px; height: 38px; margin-top: 19px; font-size: 23px; color: #999; }
.progress p svg { color: #007a92; }

.ai-head { height: 106px; background: linear-gradient(135deg, #f5ecf3, #fbefea); }
.ai-icon { width: 52px; height: 52px; display: flex; align-items: center; justify-content: center; border-radius: 14px; }
.ai-head h3 { color: #5e2a5b; }
.brand { margin-left: auto; height: 48px; padding: 0 20px; border: 2px solid #edd9ea; border-radius: 24px; background: #fff; font-size: 22px; font-weight: 700; line-height: 44px; color: #a34796; }
.ai-body { padding: 36px 36px 35px; }
.done { display: flex; align-items: center; gap: 22px; height: 123px; padding: 0 28px; border: 2px solid #c9e7c6; border-radius: 18px; background: linear-gradient(135deg, #eaf5e7, #edf8ec 50%, #f4fbf5); color: #227a1e; }
.done div { display: flex; flex-direction: column; }
.done strong { font-size: 26px; font-weight: 700; line-height: 38px; }
.done span { font-size: 24px; line-height: 36px; color: #3c8238; }
.ai-body h4 { margin-top: 24px; height: 40px; font-size: 22px; font-weight: 700; line-height: 40px; letter-spacing: 1.1px; color: #6e7590; }
.field { display: flex; align-items: center; height: 119.6px; border-bottom: 2px solid #f0f0f3; color: #8c94ab; }
.ai-body h4 + .field { margin-top: 5px; }
.field-text { display: flex; flex-direction: column; margin-left: 32px; padding-bottom: 2px; }
.field-text span { font-size: 22px; line-height: 35px; color: #999; }
.field-text strong { font-size: 27px; font-weight: 600; line-height: 38px; color: #1a1a1a; }
.score { margin-left: auto; height: 40px; padding: 0 18px; border-radius: 20px; font-size: 22px; font-weight: 700; line-height: 40px; }
.score.good { background: #e5f3e4; color: #227a1e; }
.score.warn { background: #fff3df; color: #b86e00; }
.score.info { background: #e3f2f8; color: #005f73; }
.ctas { display: flex; align-items: flex-start; gap: 18px; margin-top: 32px; }
.cta { flex: 1; height: 84px; display: flex; align-items: center; justify-content: center; gap: 14px; border-radius: 8px; background: #36b229; font-size: 29px; font-weight: 600; color: #fff; }
</style>
